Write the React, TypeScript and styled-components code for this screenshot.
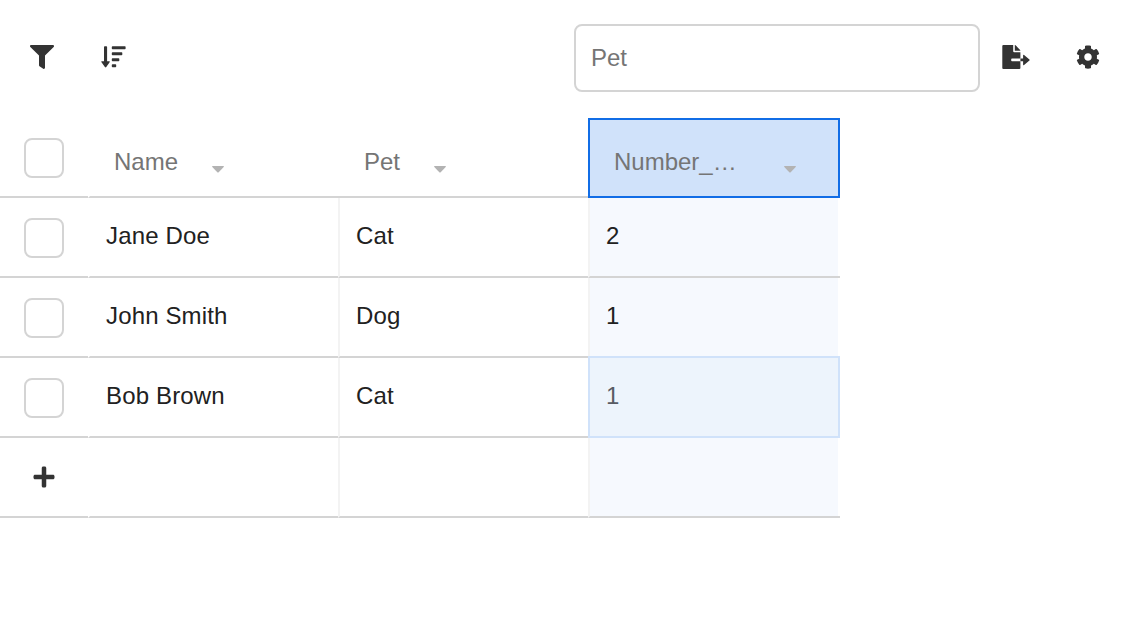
import React from "react";
import styled, { createGlobalStyle, css } from "styled-components";
import { FaCog, FaFilter, FaPlus } from "react-icons/fa";

const GlobalStyle = createGlobalStyle`
  * { box-sizing: border-box; }
  body {
    margin: 0;
    background: #fff;
    color: #212121;
    font: 24px/30px "Liberation Sans", Arial, sans-serif;
  }
`;

const Toolbar = styled.header`
  display: flex;
  align-items: center;
  height: 118px;
  padding: 0 30px 2px 30px;
`;

const IconButton = styled.button<{ $gap?: number; $lift?: number }>`
  display: flex;
  padding: 0;
  border: 0;
  background: none;
  color: #333;
  margin-left: ${({ $gap = 0 }) => $gap}px;
  margin-bottom: ${({ $lift = 0 }) => $lift}px;
`;

const SearchInput = styled.input`
  width: 406px;
  height: 68px;
  margin-left: auto;
  padding: 0 15px;
  border: 2px solid #d4d4d4;
  border-radius: 8px;
  outline: none;
  font: inherit;
  &::placeholder { color: #757575; opacity: 1; }
`;

const Grid = styled.div`
  display: grid;
  grid-template-columns: 88px 250px 250px 252px;
  width: 840px;
  grid-auto-rows: 80px;
`;

const Row = styled.div`
  display: contents;
`;

const GutterCell = styled.div`
  display: flex;
  align-items: center;
  justify-content: center;
  border-bottom: 2px solid #d4d4d4;
  padding-top: 2px;
`;

const Checkbox = styled.input.attrs({ type: "checkbox" })`
  appearance: none;
  width: 40px;
  height: 40px;
  margin: 0;
  border: 2px solid #d4d4d4;
  border-radius: 8px;
  background: #fff;
`;

const HeaderCell = styled.div<{ $selected?: boolean; $first?: boolean; $gap: number }>`
  display: flex;
  align-items: center;
  gap: ${({ $gap }) => $gap}px;
  padding: 10px 24px 0 26px;
  border-bottom: 2px solid #d4d4d4;
  color: #757575;
  ${({ $first }) =>
    $first &&
    css`
      border-left: 2px solid transparent;
      padding-left: 24px;
    `}
  ${({ $selected }) =>
    $selected &&
    css`
      padding: 10px 24px 2px 24px;
      border: 2px solid #116de6;
      background: #d0e2fa;
    `}
`;

const HeaderLabel = styled.span`
  white-space: nowrap;
`;

const Caret = styled.svg`
  display: block;
  margin-top: 14px;
  fill: #b3b3b3;
`;

const Cell = styled.div<{ $tint?: boolean; $first?: boolean; $active?: boolean }>`
  padding: 23px 16px 0;
  letter-spacing: 0.15px;
  border-left: 2px solid ${({ $first }) => ($first ? "transparent" : "#f3f3f3")};
  border-bottom: 2px solid #d4d4d4;
  ${({ $tint }) =>
    $tint && css`
      background: linear-gradient(#f6f9fe, #f6f9fe) 0 0 / calc(100% - 2px) 100% no-repeat;
    `}
  ${({ $active }) =>
    $active && css`
      margin-top: -2px;
      border: 2px solid #d0e2fa;
      background: #edf4fc;
      color: #585b63;
    `}
`;

const SortIcon = () => (
  <svg width="26" height="24" viewBox="0 0 26 24" fill="#333">
    <path d="M3 2q0-.8.8-.8h1.5q.8 0 .8.8v14.2h2q1.3 0 .5 1.1l-3.3 4.8q-.7.9-1.4 0L.5 17.3q-.8-1.1.5-1.1h2z" />
    <rect x="10.8" y="1.200" width="13.8" height="3" rx=".7" />
    <rect x="10.8" y="7.2" width="10.5" height="3" rx=".7" />
    <rect x="10.8" y="13.2" width="7.5" height="3" rx=".7" />
    <rect x="10.8" y="19.2" width="4.4" height="3" rx=".7" />
  </svg>
);

const ExportIcon = () => (
  <svg width="28" height="24" viewBox="0 0 28 24" fill="#333">
    <path d="M1.4 0H11.2v6.2q0 1 1 1h6.2v6.4H10q-.8 0-.8.7V15.6q0 .7.8.7h8.4v6.6q0 1.1-1.1 1.1H1.4Q.3 24 .3 22.9V1.1Q.3 0 1.4 0z" />
    <path d="M12.8 0q.5 0 .8.3l4.5 4.6q.3.3.3.9h-5.6z" />
    <path d="M18.4 13.6h2.7v-3q0-1.4 1-.5l5.3 4.3q.6.5 0 1.1L22.1 20q-1 .8-1-.5v-3.2h-2.7z" />
  </svg>
);

const columns = [
  { label: "Name", gap: 33.5 },
  { label: "Pet", gap: 34 },
  { label: "Number_…", gap: 47, selected: true },
];

const people = [
  ["Jane Doe", "Cat", "2"],
  ["John Smith", "Dog", "1"],
  ["Bob Brown", "Cat", "1"],
];

export default function App() {
  return (
    <>
      <GlobalStyle />
      <Toolbar>
        <IconButton aria-label="Filter" $lift={2}><FaFilter size={24} /></IconButton>
        <IconButton aria-label="Sort" $gap={47} $lift={2}><SortIcon /></IconButton>
        <SearchInput placeholder="Pet" />
        <IconButton aria-label="Export" $gap={22} $lift={2}><ExportIcon /></IconButton>
        <IconButton aria-label="Settings" $gap={46} $lift={2}><FaCog size={24} /></IconButton>
      </Toolbar>
      <Grid>
        <Row>
          <GutterCell><Checkbox aria-label="Select all" /></GutterCell>
          {columns.map((c, i) => (
            <HeaderCell key={c.label} $gap={c.gap} $selected={c.selected} $first={i === 0}>
              <HeaderLabel>{c.label}</HeaderLabel>
              <Caret width="12" height="7" viewBox="0 0 12 7">
                <path d="M.7 0h10.6q1 .2.4 1L6.7 6.2q-.7.7-1.4 0L.3 1Q-.3.2.7 0z" />
              </Caret>
            </HeaderCell>
          ))}
        </Row>
        {people.map((values, r) => (
          <Row key={values[0]}>
            <GutterCell><Checkbox aria-label={values[0]} /></GutterCell>
            {values.map((v, i) => (
              <Cell key={i} $first={i === 0} $tint={i === 2} $active={i === 2 && r === 2}>{v}</Cell>
            ))}
          </Row>
        ))}
        <Row>
          <GutterCell><IconButton aria-label="Add row" $lift={2}><FaPlus size={24} /></IconButton></GutterCell>
          <Cell $first />
          <Cell />
          <Cell $tint />
        </Row>
      </Grid>
    </>
  );
}
